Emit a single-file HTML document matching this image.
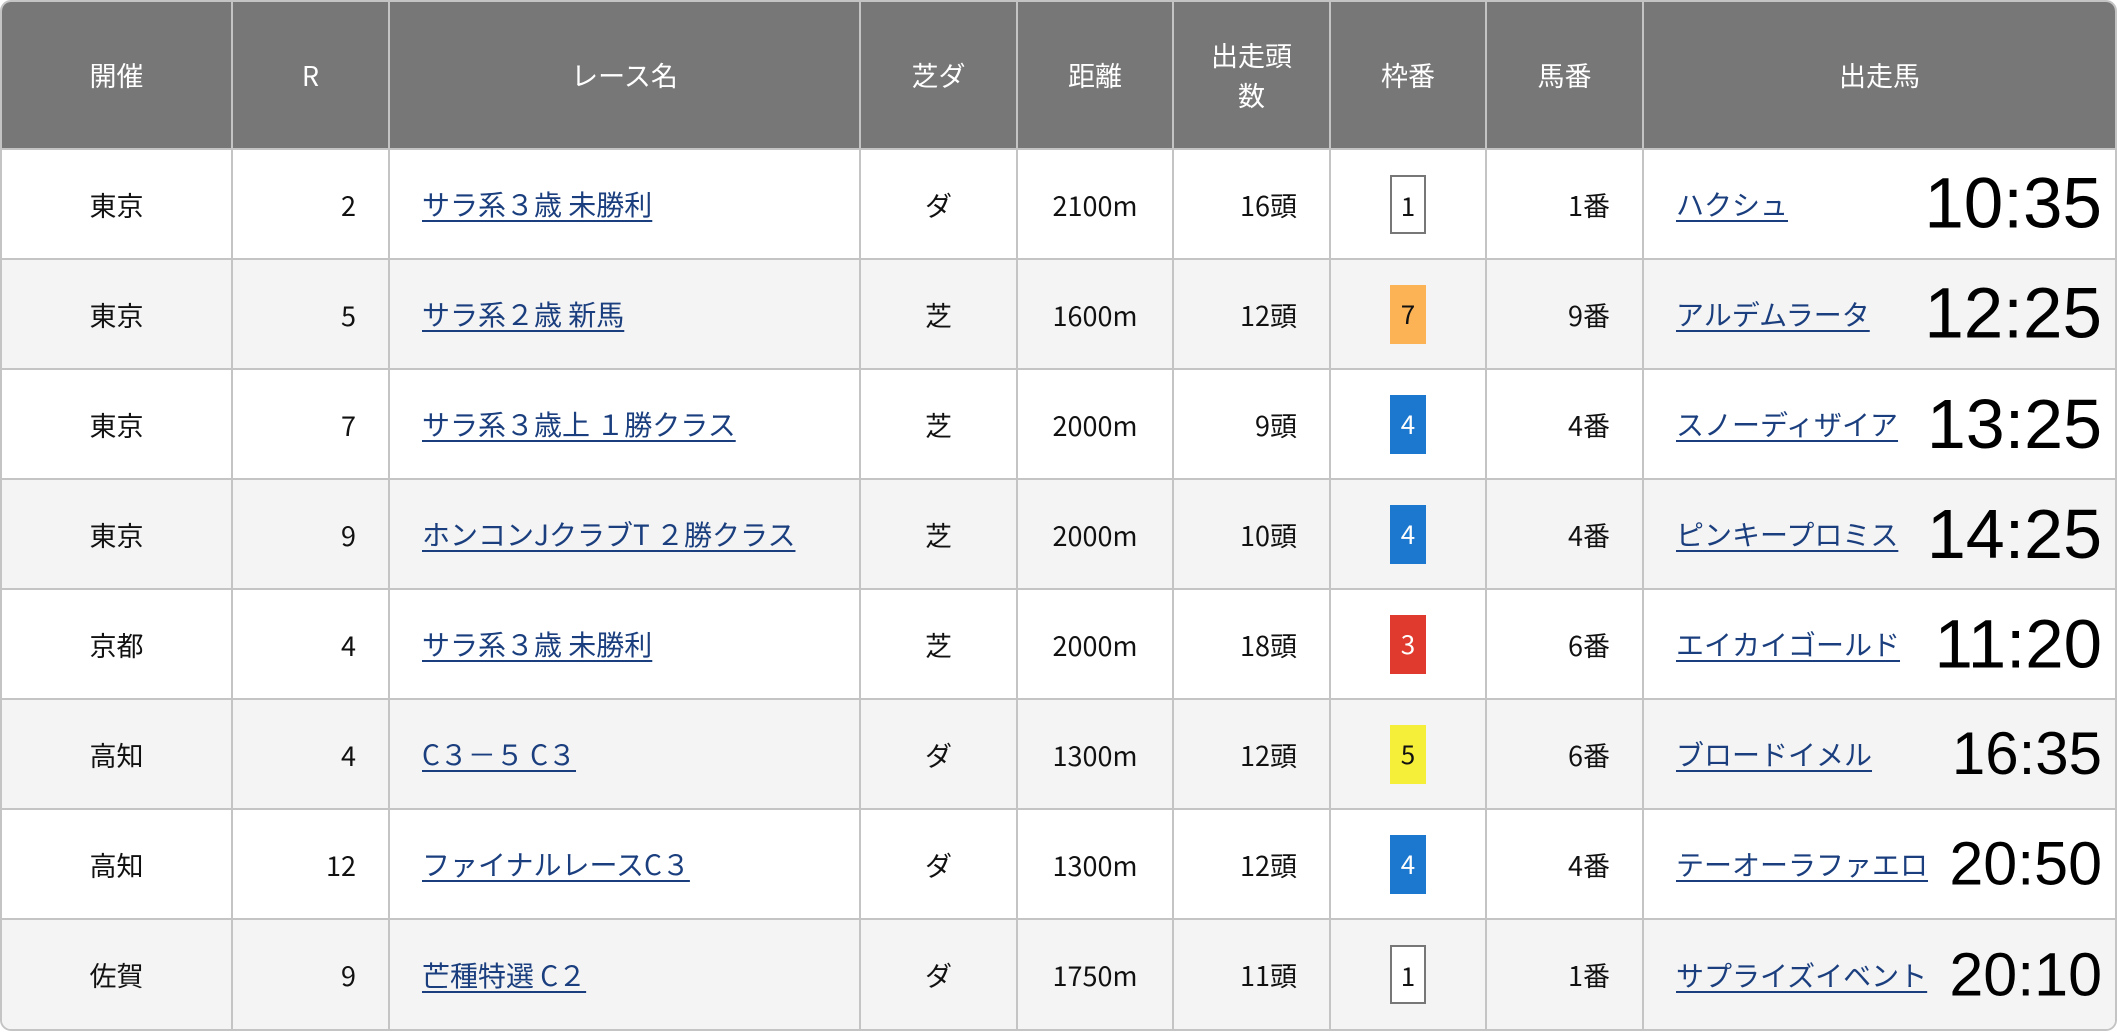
<!DOCTYPE html>
<html><head><meta charset="utf-8"><style>
html,body{margin:0;padding:0;background:#fff;}
body{width:2117px;height:1032px;overflow:hidden;font-family:"Noto Sans CJK JP","Liberation Sans",sans-serif;}
.wrap{position:absolute;left:0;top:0;width:2113px;height:1027px;border:2px solid #c4c4c4;border-radius:11px;overflow:hidden;}
table{border-collapse:collapse;table-layout:fixed;width:2113px;}
td,th{border-right:2px solid #c4c4c4;border-bottom:2px solid #c4c4c4;padding:0;font-size:27px;color:#111;font-weight:normal;box-sizing:border-box;}
th{background:#777;color:#fff;height:147px;text-align:center;line-height:40px;}
td{height:110px;}
tr td:last-child, tr th:last-child{border-right:none;}
tr:last-child td{border-bottom:none;}
tr.g td{background:#f4f4f4;}
.c{text-align:center;}
.r{text-align:right;padding-right:32px;}
.l{text-align:left;padding-left:32px;}
a{color:#1b3f7e;text-decoration:underline;text-underline-offset:5px;text-decoration-thickness:2px;font-size:28px;}
.w{display:inline-block;width:36px;height:59px;line-height:57px;text-align:center;box-sizing:border-box;vertical-align:middle;font-size:26px;}
.w1{border:2px solid #777;background:#fff;color:#111;}
.w7{background:#fbb355;color:#111;}
.w4{background:#1c78cf;color:#fff;}
.w3{background:#e03a2e;color:#fff;}
.w5{background:#f6ef3a;color:#111;}
.h{position:relative;padding-left:32px;}
.t{position:absolute;right:13px;top:50%;transform:translateY(-50%);font-family:"Liberation Sans",Arial,sans-serif;color:#000;line-height:1;}
</style></head><body>
<div class="wrap"><table>
<colgroup><col style="width:230px"><col style="width:157px"><col style="width:471px"><col style="width:157px"><col style="width:156px"><col style="width:157px"><col style="width:156px"><col style="width:157px"><col style="width:472px"></colgroup>
<tr><th>開催</th><th>R</th><th>レース名</th><th>芝ダ</th><th>距離</th><th>出走頭<br>数</th><th>枠番</th><th>馬番</th><th>出走馬</th></tr>
<tr><td class="c">東京</td><td class="r">2</td><td class="l"><a>サラ系３歳 未勝利</a></td><td class="c">ダ</td><td class="c">2100m</td><td class="r">16頭</td><td class="c"><span class="w w1">1</span></td><td class="r">1番</td><td class="h"><a>ハクシュ</a><span class="t" style="font-size:71px">10:35</span></td></tr>
<tr class="g"><td class="c">東京</td><td class="r">5</td><td class="l"><a>サラ系２歳 新馬</a></td><td class="c">芝</td><td class="c">1600m</td><td class="r">12頭</td><td class="c"><span class="w w7">7</span></td><td class="r">9番</td><td class="h"><a>アルデムラータ</a><span class="t" style="font-size:71px">12:25</span></td></tr>
<tr><td class="c">東京</td><td class="r">7</td><td class="l"><a>サラ系３歳上 １勝クラス</a></td><td class="c">芝</td><td class="c">2000m</td><td class="r">9頭</td><td class="c"><span class="w w4">4</span></td><td class="r">4番</td><td class="h"><a>スノーディザイア</a><span class="t" style="font-size:70px">13:25</span></td></tr>
<tr class="g"><td class="c">東京</td><td class="r">9</td><td class="l"><a>ホンコンJクラブT ２勝クラス</a></td><td class="c">芝</td><td class="c">2000m</td><td class="r">10頭</td><td class="c"><span class="w w4">4</span></td><td class="r">4番</td><td class="h"><a>ピンキープロミス</a><span class="t" style="font-size:70px">14:25</span></td></tr>
<tr><td class="c">京都</td><td class="r">4</td><td class="l"><a>サラ系３歳 未勝利</a></td><td class="c">芝</td><td class="c">2000m</td><td class="r">18頭</td><td class="c"><span class="w w3">3</span></td><td class="r">6番</td><td class="h"><a>エイカイゴールド</a><span class="t" style="font-size:69px">11:20</span></td></tr>
<tr class="g"><td class="c">高知</td><td class="r">4</td><td class="l"><a>C３－５ C３</a></td><td class="c">ダ</td><td class="c">1300m</td><td class="r">12頭</td><td class="c"><span class="w w5">5</span></td><td class="r">6番</td><td class="h"><a>ブロードイメル</a><span class="t" style="font-size:60px">16:35</span></td></tr>
<tr><td class="c">高知</td><td class="r">12</td><td class="l"><a>ファイナルレースC３</a></td><td class="c">ダ</td><td class="c">1300m</td><td class="r">12頭</td><td class="c"><span class="w w4">4</span></td><td class="r">4番</td><td class="h"><a>テーオーラファエロ</a><span class="t" style="font-size:61px">20:50</span></td></tr>
<tr class="g"><td class="c">佐賀</td><td class="r">9</td><td class="l"><a>芒種特選 C２</a></td><td class="c">ダ</td><td class="c">1750m</td><td class="r">11頭</td><td class="c"><span class="w w1">1</span></td><td class="r">1番</td><td class="h"><a>サプライズイベント</a><span class="t" style="font-size:61px">20:10</span></td></tr>
</table></div>
</body></html>
